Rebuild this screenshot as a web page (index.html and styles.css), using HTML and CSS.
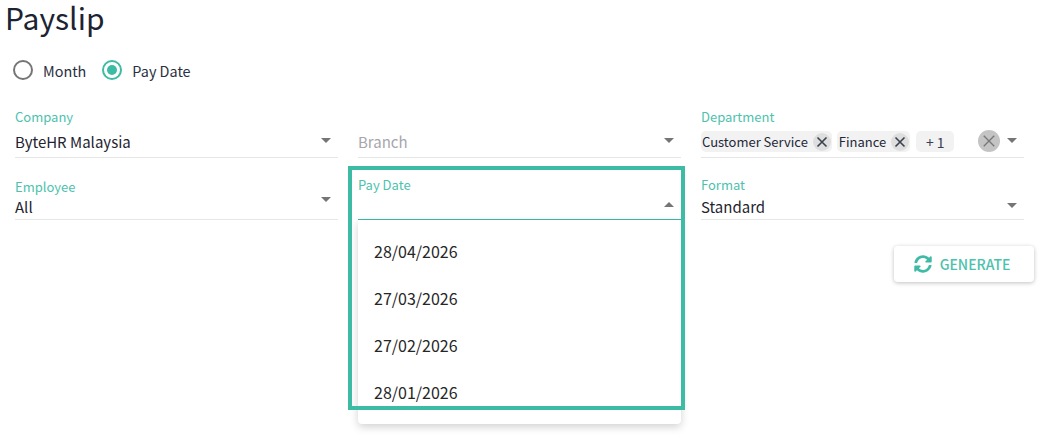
FILE: index.html
```html
<!DOCTYPE html>
<html lang="en">
<head>
<meta charset="utf-8">
<title>Payslip</title>
<link rel="stylesheet" href="styles.css">
</head>
<body>
<h1 class="title">Payslip</h1>
<div class="radios">
  <label class="radio"><span class="ring"></span>Month</label>
  <label class="radio radio-on"><span class="ring"><span class="dot"></span></span>Pay Date</label>
</div>
<div class="form">
  <div class="field field-tall">
    <div class="label">Company</div>
    <div class="control"><span class="value">ByteHR Malaysia</span><span class="arrow"></span></div>
  </div>
  <div class="field field-tall">
    <div class="control"><span class="value value-muted">Branch</span><span class="arrow"></span></div>
  </div>
  <div class="field field-tall">
    <div class="label">Department</div>
    <div class="control control-chips">
      <span class="chip chip-first">Customer Service<span class="chip-x"><svg viewBox="0 0 12 12" width="12" height="12"><path d="M1.500 1.500l9 9M10.500 1.500l-9 9"/></svg></span></span>
      <span class="chip">Finance<span class="chip-x"><svg viewBox="0 0 12 12" width="12" height="12"><path d="M1.500 1.500l9 9M10.500 1.500l-9 9"/></svg></span></span>
      <span class="chip chip-more">+ 1</span>
      <span class="clear"><svg viewBox="0 0 12 12" width="14" height="14"><path d="M1.500 1.500l9 9M10.500 1.500l-9 9"/></svg></span>
      <span class="arrow"></span>
    </div>
  </div>
  <div class="field field-short">
    <div class="label">Employee</div>
    <div class="control control-short"><span class="value value-up">All</span><span class="arrow arrow-high"></span></div>
  </div>
  <div class="field field-short">
    <div class="label">Pay Date</div>
    <div class="control control-open"><span class="value"></span><span class="arrow arrow-up"></span></div>
    <ul class="menu">
      <li>28/04/2026</li>
      <li>27/03/2026</li>
      <li>27/02/2026</li>
      <li>28/01/2026</li>
    </ul>
  </div>
  <div class="field field-short">
    <div class="label">Format</div>
    <div class="control control-open control-plain"><span class="value">Standard</span><span class="arrow"></span></div>
  </div>
</div>
<div class="actions">
  <button class="generate" type="button">
    <svg viewBox="0 0 512 512" width="18" height="18"><path d="M370.7 133.3C339.5 104 298.9 88 255.800 88c-77.500.100-144.300 53.200-162.800 126.900-1.300 5.400-6.100 9.200-11.700 9.200H24.100c-7.500 0-13.200-6.800-11.800-14.200C33.900 94.900 134.800 8 256 8c66.400 0 126.800 26.100 171.300 68.700L463 41c15.100-15.100 41-4.400 41 17v134c0 13.300-10.700 24-24 24H346c-21.400 0-32.100-25.900-17-41l41.700-41.700zM32 296h134c21.400 0 32.100 25.900 17 41l-41.700 41.700c31.200 29.300 71.800 45.300 114.900 45.300 77.400-.100 144.300-53.100 162.800-126.900 1.300-5.400 6.100-9.200 11.700-9.200h57.300c7.500 0 13.200 6.800 11.800 14.200C478.100 417.100 377.200 504 256 504c-66.400 0-126.800-26.100-171.300-68.700L49 471c-15.100 15.100-41 4.400-41-17V320c0-13.300 10.700-24 24-24z"/></svg>
    GENERATE
  </button>
</div>
<div class="highlight"></div>
</body>
</html>
```
FILE: styles.css
```css
* { box-sizing: border-box; }
html, body { margin: 0; padding: 0; }
body {
  width: 1038px;
  height: 439px;
  overflow: hidden;
  background: #fff;
  font-family: "Noto Sans CJK SC", "Noto Sans", sans-serif;
  color: #1f2430;
  position: relative;
}
.title {
  margin: 0;
  padding: 0 0 0 5px;
  height: 38px;
  font-size: 30px;
  font-weight: 400;
  line-height: 35px;
  color: #1c2433;
}
.radios {
  display: flex;
  gap: 16px;
  padding: 22px 0 0 13px;
  height: 70px;
}
.radio {
  display: flex;
  align-items: center;
  gap: 10px;
  height: 20px;
  font-size: 14.400px;
  color: #2a3040;
}
.ring {
  width: 20px;
  height: 20px;
  border-radius: 50%;
  border: 2px solid #757575;
  display: flex;
  align-items: center;
  justify-content: center;
}
.radio-on .ring { border-color: #3dbba5; }
.dot { width: 10px; height: 10px; border-radius: 50%; background: #3dbba5; }
.form {
  display: grid;
  grid-template-columns: 323px 323px 323px;
  column-gap: 20px;
  padding-left: 15px;
}
.field { position: relative; display: flex; flex-direction: column; justify-content: flex-end; }
.field-tall { height: 50px; }
.field-short { height: 62px; }
.label {
  font-size: 13px;
  line-height: 18px;
  color: #4cc2ad;
}
.control {
  display: flex;
  align-items: center;
  height: 32px;
  border-bottom: 1px solid #e6e6e6;
  padding-right: 7px;
}
.control-short { height: 24px; }
.control-open { height: 26px; border-bottom-color: #3dbba5; }
.control-plain { border-bottom-color: #e6e6e6; }
.value { flex: 1; font-size: 15px; line-height: 20px; color: #1f2430; }
.value-up { margin-bottom: 2px; }
.value-muted { color: #a6a6ac; }
.arrow {
  width: 0;
  height: 0;
  border-left: 5px solid transparent;
  border-right: 5px solid transparent;
  border-top: 5px solid #757575;
  margin-bottom: 2px;
}
.arrow-high { margin-bottom: 16px; }
.arrow-up { border-top: 0; border-bottom: 5px solid #757575; margin-bottom: 4px; }
.control-chips { gap: 5px; }
.chip {
  display: flex;
  align-items: center;
  height: 21px;
  padding-left: 2px;
  border-radius: 5px;
  background: #f2f2f2;
  font-size: 13px;
  line-height: 20px;
  color: #232838;
}
.chip-first { padding-left: 1px; }
.chip-x {
  width: 18px;
  height: 18px;
  margin-left: 5px;
  margin-right: 1px;
  border-radius: 50%;
  background: #dedede;
  display: flex;
  align-items: center;
  justify-content: center;
}
.chip-x svg { stroke: #3a4050; stroke-width: 1.600; fill: none; }
.chip-more { padding: 0; width: 38px; margin-left: 1px; justify-content: center; font-size: 14px; color: #3a4050; }
.clear {
  width: 22px;
  height: 22px;
  margin-left: auto;
  margin-right: 2px;
  margin-bottom: 2px;
  border-radius: 50%;
  background: #c4c4c4;
  display: flex;
  align-items: center;
  justify-content: center;
}
.clear svg { stroke: #787878; stroke-width: 1.200; fill: none; }
.menu {
  position: absolute;
  top: 62px;
  left: 0;
  width: 323px;
  height: 204px;
  margin: 0;
  padding: 8px 0 0;
  list-style: none;
  background: #fff;
  border-radius: 0 0 4px 4px;
  box-shadow: 0 3px 8px rgba(0, 0, 0, .18);
  z-index: 1;
}
.menu li {
  height: 47px;
  line-height: 47px;
  padding-left: 16px;
  font-size: 16px;
  color: #262626;
}
.actions { display: flex; justify-content: flex-end; padding: 26px 4px 0 0; }
.generate {
  display: flex;
  align-items: center;
  justify-content: center;
  gap: 8px;
  width: 140px;
  height: 36px;
  padding: 0 4px 0 0;
  border: 0;
  border-radius: 4px;
  background: #fff;
  box-shadow: 0 1px 4px rgba(0, 0, 0, .25);
  font-family: inherit;
  font-size: 14px;
  font-weight: 500;
  color: #4cc2ad;
}
.generate svg { fill: #3dbba5; }
.highlight {
  position: absolute;
  left: 348px;
  top: 166px;
  width: 337px;
  height: 244px;
  border: 4px solid #3dbba5;
  z-index: 2;
  pointer-events: none;
}
```
